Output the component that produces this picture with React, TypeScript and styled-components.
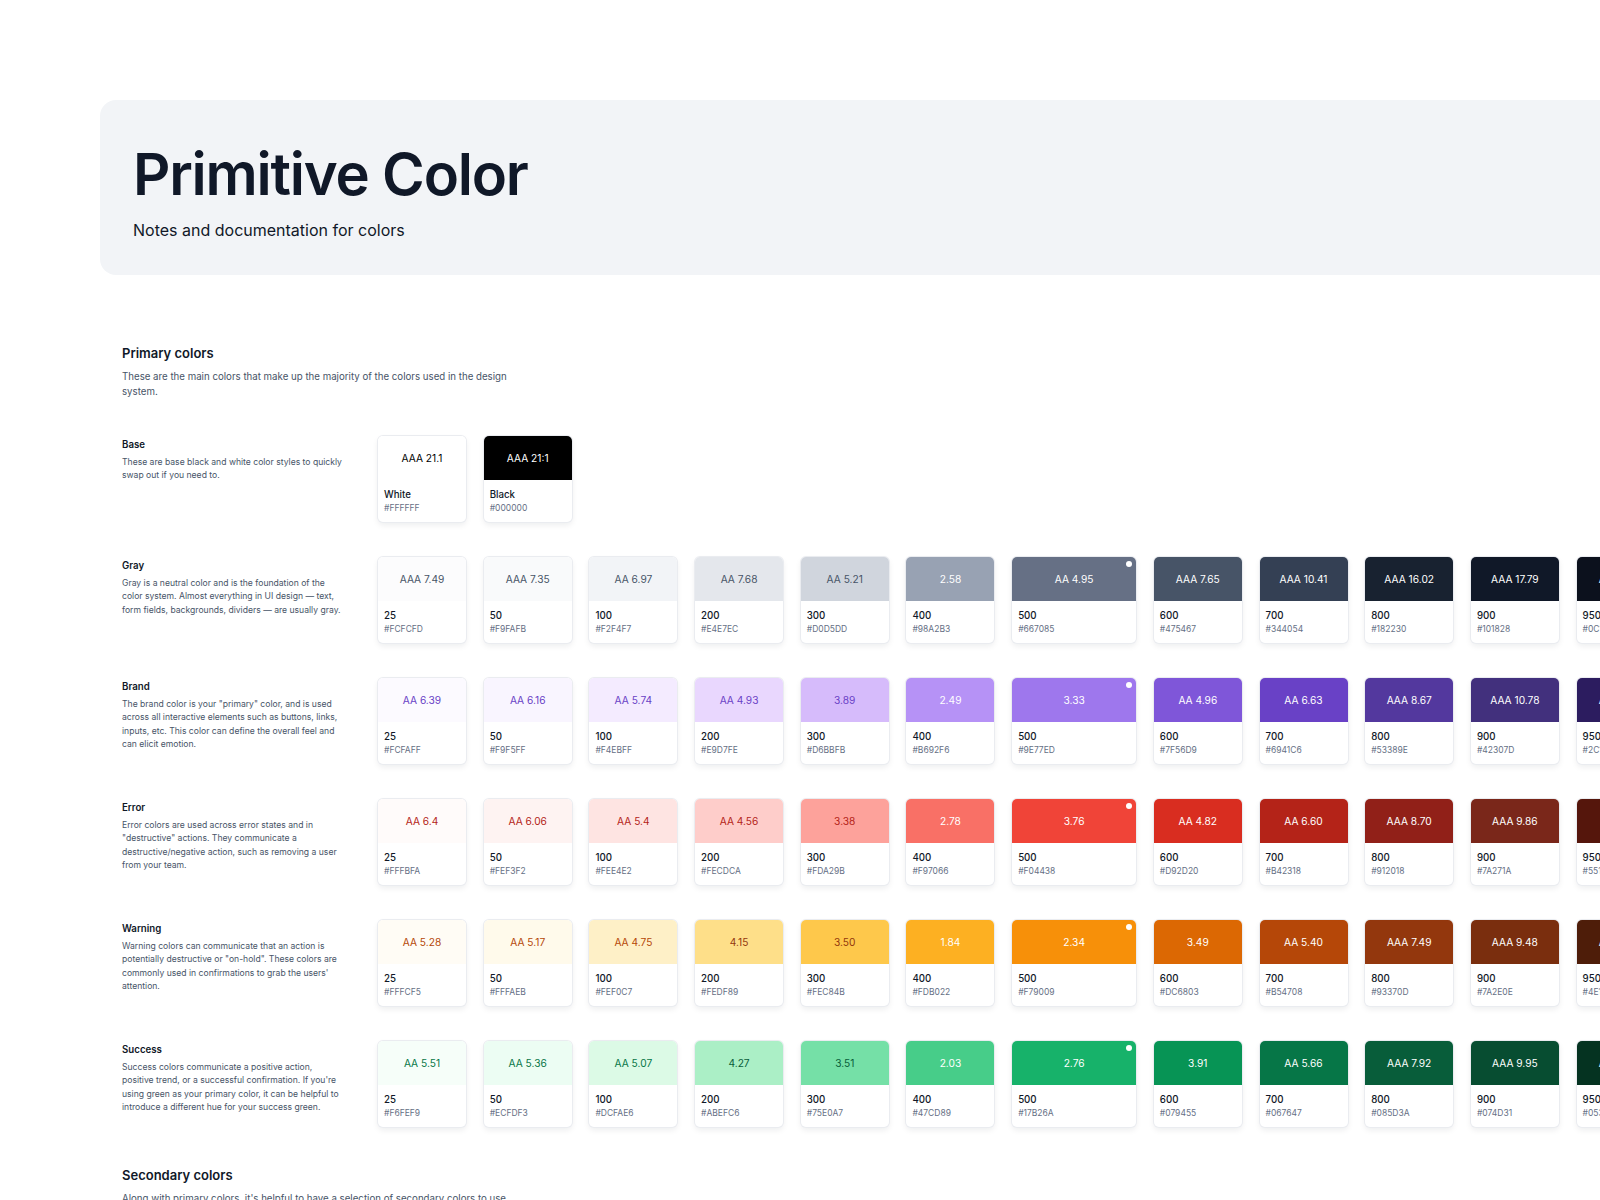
import React from "react";
import styled, { createGlobalStyle } from "styled-components";

const Global = createGlobalStyle`
  body { margin: 0; background: #fff; font-family: Inter, "Noto Sans", sans-serif; color: #101828; }
  #root { width: 1600px; height: 1200px; overflow: hidden; }
`;

const Page = styled.div`
  padding: 100px 0 0 100px;
  width: 1750px;
`;
const Header = styled.header`
  background: #F2F4F7;
  border-radius: 16px 0 0 16px;
  height: 175px;
  padding: 38px 0 0 33px;
  box-sizing: border-box;
`;
const Title = styled.h1`
  margin: 0;
  font-family: Inter, sans-serif;
  font-weight: 600;
  font-size: 58px;
  letter-spacing: -1.2px;
  line-height: 72px;
  color: #101828;
`;
const Subtitle = styled.p`
  margin: 10px 0 0;
  font-size: 16px;
  color: #101828;
`;
const Section = styled.section<{ $top?: number }>`
  padding: ${p => p.$top ?? 70}px 0 0 22px;
`;
const SectionTitle = styled.h2`
  margin: 0;
  font-size: 13px;
  font-weight: 600;
  color: #101828;
`;
const SectionDesc = styled.p`
  margin: 8px 0 0;
  font-size: 9.7px;
  line-height: 15px;
  color: #475467;
  width: 400px;
`;
const Rows = styled.div`
  display: flex;
  flex-direction: column;
  gap: 35px;
  margin-top: 37px;
`;
const Row = styled.div`
  display: flex;
`;
const Info = styled.div`
  width: 256px;
  padding-top: 3px;
  flex: none;
`;
const InfoTitle = styled.div`
  font-size: 9.7px;
  font-weight: 600;
  color: #101828;
`;
const InfoDesc = styled.div`
  margin-top: 6px;
  font-size: 8.6px;
  line-height: 13.3px;
  color: #475467;
  width: 222px;
`;
const Swatches = styled.div`
  display: flex;
  gap: 17.7px;
`;
const Card = styled.div<{ $wide?: boolean }>`
  width: ${p => (p.$wide ? 124 : 88)}px;
  height: 86px;
  border-radius: 5px;
  background: #fff;
  box-shadow: 0 0 0 1px #EAECF0, 0 3px 6px rgba(16,24,40,0.08);
  overflow: hidden;
  position: relative;
  flex: none;
`;
const Top = styled.div<{ $bg: string; $fg: string }>`
  height: 44px;
  background: ${p => p.$bg};
  color: ${p => p.$fg};
  display: flex;
  align-items: center;
  justify-content: center;
  font-size: 10.2px;
`;
const Dot = styled.span`
  position: absolute;
  top: 4px;
  right: 4px;
  width: 6px;
  height: 6px;
  border-radius: 50%;
  background: #fff;
`;
const Bottom = styled.div`
  padding: 9px 6px 0;
`;
const Name = styled.div`
  font-size: 9.7px;
  font-weight: 500;
  color: #101828;
`;
const Hex = styled.div`
  margin-top: 3px;
  font-size: 8.5px;
  color: #667085;
`;

type Sw = [string, string, string, string];
const steps = ["25","50","100","200","300","400","500","600","700","800","900","950"];

const mk = (hexes: string[], labels: string[], fgLight: string, lightCount: number): Sw[] =>
  hexes.map((h, i) => [steps[i], h, labels[i], i < lightCount ? fgLight : "#fff"]);

const rows: { title: string; desc: string; items: Sw[] }[] = [
  {
    title: "Gray",
    desc: "Gray is a neutral color and is the foundation of the color system. Almost everything in UI design — text, form fields, backgrounds, dividers — are usually gray.",
    items: mk(
      ["#FCFCFD","#F9FAFB","#F2F4F7","#E4E7EC","#D0D5DD","#98A2B3","#667085","#475467","#344054","#182230","#101828","#0C111D"],
      ["AAA 7.49","AAA 7.35","AA 6.97","AA 7.68","AA 5.21","2.58","AA 4.95","AAA 7.65","AAA 10.41","AAA 16.02","AAA 17.79","AAA 19.2"],
      "#475467", 5),
  },
  {
    title: "Brand",
    desc: "The brand color is your \"primary\" color, and is used across all interactive elements such as buttons, links, inputs, etc. This color can define the overall feel and can elicit emotion.",
    items: mk(
      ["#FCFAFF","#F9F5FF","#F4EBFF","#E9D7FE","#D6BBFB","#B692F6","#9E77ED","#7F56D9","#6941C6","#53389E","#42307D","#2C1C5F"],
      ["AA 6.39","AA 6.16","AA 5.74","AA 4.93","3.89","2.49","3.33","AA 4.96","AA 6.63","AAA 8.67","AAA 10.78","AAA 14.3"],
      "#6941C6", 5),
  },
  {
    title: "Error",
    desc: "Error colors are used across error states and in \"destructive\" actions. They communicate a destructive/negative action, such as removing a user from your team.",
    items: mk(
      ["#FFFBFA","#FEF3F2","#FEE4E2","#FECDCA","#FDA29B","#F97066","#F04438","#D92D20","#B42318","#912018","#7A271A","#55160C"],
      ["AA 6.4","AA 6.06","AA 5.4","AA 4.56","3.38","2.78","3.76","AA 4.82","AA 6.60","AAA 8.70","AAA 9.86","AAA 14.1"],
      "#B42318", 5),
  },
  {
    title: "Warning",
    desc: "Warning colors can communicate that an action is potentially destructive or \"on-hold\". These colors are commonly used in confirmations to grab the users' attention.",
    items: mk(
      ["#FFFCF5","#FFFAEB","#FEF0C7","#FEDF89","#FEC84B","#FDB022","#F79009","#DC6803","#B54708","#93370D","#7A2E0E","#4E1D09"],
      ["AA 5.28","AA 5.17","AA 4.75","4.15","3.50","1.84","2.34","3.49","AA 5.40","AAA 7.49","AAA 9.48","AAA 14.5"],
      "#B54708", 5),
  },
  {
    title: "Success",
    desc: "Success colors communicate a positive action, positive trend, or a successful confirmation. If you're using green as your primary color, it can be helpful to introduce a different hue for your success green.",
    items: mk(
      ["#F6FEF9","#ECFDF3","#DCFAE6","#ABEFC6","#75E0A7","#47CD89","#17B26A","#079455","#067647","#085D3A","#074D31","#053321"],
      ["AA 5.51","AA 5.36","AA 5.07","4.27","3.51","2.03","2.76","3.91","AA 5.66","AAA 7.92","AAA 9.95","AAA 13.2"],
      "#067647", 5),
  },
];
rows[2].items[3][3] = "#B42318"; rows[2].items[4][3] = "#B42318";
rows[3].items[3][3] = "#93370D"; rows[3].items[4][3] = "#93370D";
rows[4].items[3][3] = "#085D3A"; rows[4].items[4][3] = "#085D3A";

export default function App() {
  return (
    <>
      <Global />
      <Page>
        <Header>
          <Title>Primitive Color</Title>
          <Subtitle>Notes and documentation for colors</Subtitle>
        </Header>
        <Section>
          <SectionTitle>Primary colors</SectionTitle>
          <SectionDesc>These are the main colors that make up the majority of the colors used in the design system.</SectionDesc>
          <Rows>
            <Row>
              <Info>
                <InfoTitle>Base</InfoTitle>
                <InfoDesc>These are base black and white color styles to quickly swap out if you need to.</InfoDesc>
              </Info>
              <Swatches>
                <Card>
                  <Top $bg="#FFFFFF" $fg="#000">AAA 21.1</Top>
                  <Bottom><Name>White</Name><Hex>#FFFFFF</Hex></Bottom>
                </Card>
                <Card>
                  <Top $bg="#000000" $fg="#fff">AAA 21:1</Top>
                  <Bottom><Name>Black</Name><Hex>#000000</Hex></Bottom>
                </Card>
              </Swatches>
            </Row>
            {rows.map(r => (
              <Row key={r.title}>
                <Info>
                  <InfoTitle>{r.title}</InfoTitle>
                  <InfoDesc>{r.desc}</InfoDesc>
                </Info>
                <Swatches>
                  {r.items.map(([s, h, l, fg]) => (
                    <Card key={s} $wide={s === "500"}>
                      <Top $bg={h} $fg={fg}>{l}</Top>
                      {s === "500" && <Dot />}
                      <Bottom><Name>{s}</Name><Hex>{h}</Hex></Bottom>
                    </Card>
                  ))}
                </Swatches>
              </Row>
            ))}
          </Rows>
        </Section>
        <Section $top={40}>
          <SectionTitle>Secondary colors</SectionTitle>
          <SectionDesc>Along with primary colors, it's helpful to have a selection of secondary colors to use</SectionDesc>
        </Section>
      </Page>
    </>
  );
}
